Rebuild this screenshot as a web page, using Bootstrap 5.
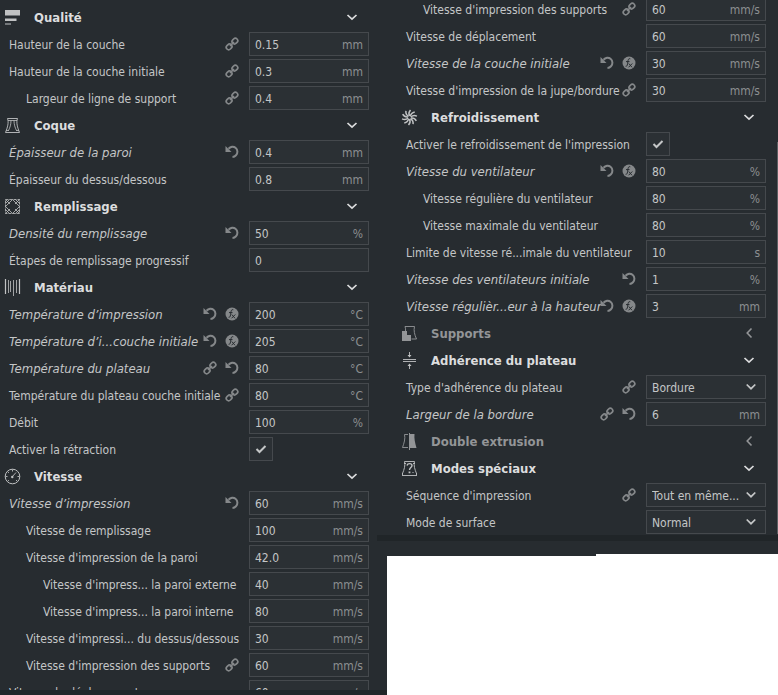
<!DOCTYPE html>
<html lang="fr">
<head>
<meta charset="utf-8">
<meta name="viewport" content="width=device-width, initial-scale=1">
<title>Paramètres d'impression</title>
<link href="https://cdn.jsdelivr.net/npm/bootstrap@5.3.0/dist/css/bootstrap.min.css" rel="stylesheet">
<style>
:root{--panel:#272c30;--field:#2b3034;--line:#45494d;--strip:#202528;--txt:#c4c6c7;--dim:#8c8f91;--head:#dcddde}
body{background:#fff;color:var(--txt);font:12px/16px "DejaVu Sans Condensed","DejaVu Sans",sans-serif}
.pane-a{width:calc(50% - 2px);background:var(--panel)}
.pane-b{margin-left:-10px;flex:1 1 0;min-width:0}
.list-a{padding:5px 18px 0 0}
.list-b{padding:0 12px 1px 20px;background:var(--panel)}
.list-b>.stack{margin-top:-3px}
.stack{display:flex;flex-direction:column;gap:3px}
.strip{height:5px;background:var(--strip)}
.strip-b{height:6px}
.line{display:flex;align-items:center;height:24px;flex:none;padding-left:9px}
.line>label{flex:1 1 0;min-width:0;white-space:nowrap;padding-top:2px}
.in1{padding-left:26px}
.in2{padding-left:43px}
.mod>label{font-style:italic;font-size:13px}
.marks{display:flex;gap:8px;margin-right:10px;color:#85888a}
.marks svg{width:14px;height:14px}
.box{width:120px;height:24px;flex:none;background:var(--field);border:1px solid var(--line);display:flex;align-items:center;padding:2px 5px 0}
.box input{flex:1 1 0;min-width:0;width:0;background:none;border:0;padding:0;color:var(--txt);outline:0}
.box span{color:var(--dim)}
.tickcell{width:120px;flex:none;display:flex}
.form-check-input.tick{width:24px;height:24px;margin:0;border-radius:0;border:1px solid var(--line);background-color:var(--field)}
.form-check-input.tick:checked{background-color:var(--field);border-color:var(--line);background-size:22px 22px;background-image:url("data:image/svg+xml,%3Csvg xmlns='http://www.w3.org/2000/svg' viewBox='0 0 22 22'%3E%3Cpath d='M6.500 11 9.500 14 15.500 8' fill='none' stroke='%23c4c6c7' stroke-width='2'/%3E%3C/svg%3E")}
.form-select.pick{width:120px;height:24px;flex:none;border-radius:0;border:1px solid var(--line);color:var(--txt);font-size:12px;line-height:16px;padding:2px 18px 0 5px;background:var(--field) url("data:image/svg+xml,%3Csvg xmlns='http://www.w3.org/2000/svg' viewBox='0 0 10 8'%3E%3Cpath d='M.700 1.500 5 5.700 9.300 1.500' fill='none' stroke='%23c4c6c7' stroke-width='1.700'/%3E%3C/svg%3E") no-repeat right 9px center/10px 8px}
.cat{display:flex;align-items:center;height:24px;flex:none;width:100%;border:0;background:none;padding:0 11px 0 4px;color:var(--head);font-weight:700;font-size:13px;text-align:left}
.cat span{padding-top:2px}
.cat svg:first-child{width:17px;height:17px;margin-right:13px;color:#c0c2c3}
.cat svg:last-child{width:12px;height:12px;margin-left:auto}
.cat.off,.cat.off svg:first-child{color:#939597}
.foot-l{flex:0 0 54.6%;height:15px;background:var(--panel)}
.foot-r{flex:1;height:13px;background:var(--panel)}
.pane-b .rail{width:1px;right:0;top:142px;bottom:22px;background:#5b5f62}
</style>
<script src="https://cdn.jsdelivr.net/npm/bootstrap@5.3.0/dist/js/bootstrap.bundle.min.js"></script>
</head>
<body>
<svg class="d-none" aria-hidden="true">
<symbol id="link" viewBox="0 0 14 14"><g fill="none" stroke="currentColor" stroke-width="1.700"><rect x="-3" y="-2.400" width="6" height="4.800" rx="2.400" transform="translate(4.100 9.900) rotate(-45)"/><rect x="-3" y="-2.400" width="6" height="4.800" rx="2.400" transform="translate(9.900 4.100) rotate(-45)"/><path d="M5 9 9 5"/></g></symbol>
<symbol id="undo" viewBox="0 0 14 14"><path d="M3.500 3.700C5.500 1.600 8.500 1.200 10.500 2.800c2.500 2 2.400 5.500.5 7.500-1 1.100-2.200 1.600-3.500 1.700" fill="none" stroke="currentColor" stroke-width="2"/><path d="M.500 1v6h6z" fill="currentColor"/></symbol>
<symbol id="fx" viewBox="0 0 14 14"><circle cx="7" cy="7" r="6.500" fill="currentColor"/><path d="M8.300 2.800C6.300 2 6.100 4 5.800 6 5.500 8.500 5.300 10.700 3.600 10.300M4 5.600h3.500M6.800 7.500l3.200 3.800M10.300 7.500l-3.800 3.800" fill="none" stroke="#272c30" stroke-width="1"/></symbol>
<symbol id="down" viewBox="0 0 12 12"><path d="M1.500 4 6 8.200 10.500 4" fill="none" stroke="currentColor" stroke-width="1.700"/></symbol>
<symbol id="side" viewBox="0 0 12 12"><path d="M8.500 1.500 4.200 6l4.300 4.500" fill="none" stroke="currentColor" stroke-width="1.600"/></symbol>
<symbol id="quality" viewBox="0 0 17 17"><path d="M1 1h15v5.500H1zM1 9.500h11.500V12H1zM1 14.500h6v1H1z" fill="currentColor"/></symbol>
<symbol id="shell" viewBox="0 0 17 17"><g fill="none" stroke="currentColor" stroke-width=".9"><path d="M3.500 1.500h10c-1.500 4 0 9 2 14h-14c2-5 3.500-10 2-14z"/><path d="M7 3.500c0 4-1 7-2.500 10M10 3.500c0 4 1 7 2.500 10M4 3.500h9M2 13.500h3M12 13.500h3" stroke-width=".8"/></g></symbol>
<symbol id="infill" viewBox="0 0 17 17"><g fill="none" stroke="currentColor" stroke-width=".8"><path d="M1.500 1.500h14v14h-14z" stroke-dasharray="3 1"/><path d="M1.500 8.500l7-7 7 7-7 7zM1.500 5.500l4-4M11.500 1.500l4 4M1.500 11.500l4 4M15.500 11.500l-4 4M1.500 1.500l4.500 4.500M15.500 1.500 11 6M1.500 15.500 6 11M15.500 15.500 11 11"/></g></symbol>
<symbol id="material" viewBox="0 0 17 17"><path d="M1.500 0v15M15.500 0v15" stroke="currentColor" stroke-width="1.200"/><path d="M4.500 1v13M6.500 2v11M9.500 1v16M12.500 1v13" stroke="currentColor" stroke-width=".8"/></symbol>
<symbol id="speed" viewBox="0 0 17 17"><circle cx="8.500" cy="8.500" r="7.300" fill="none" stroke="currentColor" stroke-width="1"/><path d="M8.500 1.500v2M1.500 8.500h2M13.500 8.500h2M3.700 3.700l1.200 1.200M3.700 13.300l1.200-1.200M12 12l1.300 1.300M8 9l4-4.500" stroke="currentColor" stroke-width=".9"/><circle cx="8.300" cy="9" r="1.200" fill="currentColor"/></symbol>
<symbol id="cool" viewBox="0 0 17 17"><g fill="none" stroke="currentColor" stroke-width="1.500"><path id="bl" d="M8.500 7C7.500 5 7.700 3 9.500 1M8.500 10C9.500 12 9.300 14 7.500 16"/><use href="#bl" transform="rotate(36 8.500 8.500)"/><use href="#bl" transform="rotate(72 8.500 8.500)"/><use href="#bl" transform="rotate(108 8.500 8.500)"/><use href="#bl" transform="rotate(144 8.500 8.500)"/></g></symbol>
<symbol id="support" viewBox="0 0 17 17"><path d="M4.500 6c.3-1.500 0-3-.5-4.500h9.500c-1 4 0 8 2 12.500h-5" fill="none" stroke="currentColor" stroke-width=".9"/><path d="M1 6h5v4h4v6H1z" fill="currentColor"/></symbol>
<symbol id="adhere" viewBox="0 0 17 17"><path d="M2 7.500h13M2 9.500h13M8.500 0v5M8.500 17v-5" stroke="currentColor" stroke-width=".9"/><path d="M6.500 3h4L8.500 5.500zM6.500 14h4l-2-2.500z" fill="currentColor"/></symbol>
<symbol id="dual" viewBox="0 0 17 17"><path d="M7 1.500H3.500c1 4-.5 9-2 13H7" fill="none" stroke="currentColor" stroke-width=".9"/><path d="M8 0h1v17H8zM9 1h4.500c-.5 4 .5 9 2 14H9z" fill="currentColor"/></symbol>
<symbol id="special" viewBox="0 0 17 17"><path d="M3.500 1.500h10c-1 4 .3 8 2 12M3.500 1.500c1 4-.3 8-2 12M1 15.500h15M1.500 13v2M15.500 13v2M3 3.500h2M12 3.500h2" fill="none" stroke="currentColor" stroke-width=".9"/><path d="M6 5.500c.5-2.500 5-2.500 5 0 0 2-2.500 2-2.500 4.500" fill="none" stroke="currentColor" stroke-width="1.400"/><path d="M7.600 11.500h1.800v1.800H7.600zM11.500 12h1v1h-1z" fill="currentColor"/></symbol>
</svg>
<main class="d-flex vh-100 overflow-hidden align-items-start">
<section class="pane-a d-flex flex-column flex-shrink-0 h-100">
<div class="list-a flex-grow-1 overflow-hidden">
<div class="stack">
<button class="cat" type="button"><svg><use href="#quality"/></svg><span>Qualité</span><svg><use href="#down"/></svg></button>
<div class="line"><label for="a1">Hauteur de la couche</label><div class="marks"><svg><use href="#link"/></svg></div><div class="box"><input id="a1" value="0.15"><span>mm</span></div></div>
<div class="line"><label for="a2">Hauteur de la couche initiale</label><div class="marks"><svg><use href="#link"/></svg></div><div class="box"><input id="a2" value="0.3"><span>mm</span></div></div>
<div class="line in1"><label for="a3">Largeur de ligne de support</label><div class="marks"><svg><use href="#link"/></svg></div><div class="box"><input id="a3" value="0.4"><span>mm</span></div></div>
<button class="cat" type="button"><svg><use href="#shell"/></svg><span>Coque</span><svg><use href="#down"/></svg></button>
<div class="line mod"><label for="a4">Épaisseur de la paroi</label><div class="marks"><svg><use href="#undo"/></svg></div><div class="box"><input id="a4" value="0.4"><span>mm</span></div></div>
<div class="line"><label for="a5">Épaisseur du dessus/dessous</label><div class="box"><input id="a5" value="0.8"><span>mm</span></div></div>
<button class="cat" type="button"><svg><use href="#infill"/></svg><span>Remplissage</span><svg><use href="#down"/></svg></button>
<div class="line mod"><label for="a6">Densité du remplissage</label><div class="marks"><svg><use href="#undo"/></svg></div><div class="box"><input id="a6" value="50"><span>%</span></div></div>
<div class="line"><label for="a7">Étapes de remplissage progressif</label><div class="box"><input id="a7" value="0"></div></div>
<button class="cat" type="button"><svg><use href="#material"/></svg><span>Matériau</span><svg><use href="#down"/></svg></button>
<div class="line mod"><label for="a8">Température d’impression</label><div class="marks"><svg><use href="#undo"/></svg><svg><use href="#fx"/></svg></div><div class="box"><input id="a8" value="200"><span>°C</span></div></div>
<div class="line mod"><label for="a9">Température d’i...couche initiale</label><div class="marks"><svg><use href="#undo"/></svg><svg><use href="#fx"/></svg></div><div class="box"><input id="a9" value="205"><span>°C</span></div></div>
<div class="line mod"><label for="a10">Température du plateau</label><div class="marks"><svg><use href="#link"/></svg><svg><use href="#undo"/></svg></div><div class="box"><input id="a10" value="80"><span>°C</span></div></div>
<div class="line"><label for="a11">Température du plateau couche initiale</label><div class="marks"><svg><use href="#link"/></svg></div><div class="box"><input id="a11" value="80"><span>°C</span></div></div>
<div class="line"><label for="a12">Débit</label><div class="box"><input id="a12" value="100"><span>%</span></div></div>
<div class="line"><label for="a13">Activer la rétraction</label><div class="tickcell"><input id="a13" class="form-check-input tick" type="checkbox" checked></div></div>
<button class="cat" type="button"><svg><use href="#speed"/></svg><span>Vitesse</span><svg><use href="#down"/></svg></button>
<div class="line mod"><label for="a14">Vitesse d’impression</label><div class="marks"><svg><use href="#undo"/></svg></div><div class="box"><input id="a14" value="60"><span>mm/s</span></div></div>
<div class="line in1"><label for="a15">Vitesse de remplissage</label><div class="box"><input id="a15" value="100"><span>mm/s</span></div></div>
<div class="line in1"><label for="a16">Vitesse d'impression de la paroi</label><div class="box"><input id="a16" value="42.0"><span>mm/s</span></div></div>
<div class="line in2"><label for="a17">Vitesse d'impress... la paroi externe</label><div class="box"><input id="a17" value="40"><span>mm/s</span></div></div>
<div class="line in2"><label for="a18">Vitesse d'impress... la paroi interne</label><div class="box"><input id="a18" value="80"><span>mm/s</span></div></div>
<div class="line in1"><label for="a19">Vitesse d'impressi... du dessus/dessous</label><div class="box"><input id="a19" value="30"><span>mm/s</span></div></div>
<div class="line in1"><label for="a20">Vitesse d'impression des supports</label><div class="marks"><svg><use href="#link"/></svg></div><div class="box"><input id="a20" value="60"><span>mm/s</span></div></div>
<div class="line"><label for="a21">Vitesse de déplacement</label><div class="box"><input id="a21" value="60"><span>mm/s</span></div></div>
</div>
</div>
<div class="strip flex-shrink-0"></div>
</section>
<section class="pane-b position-relative">
<div class="list-b overflow-hidden">
<div class="stack">
<div class="line in1"><label for="b1">Vitesse d'impression des supports</label><div class="marks"><svg><use href="#link"/></svg></div><div class="box"><input id="b1" value="60"><span>mm/s</span></div></div>
<div class="line"><label for="b2">Vitesse de déplacement</label><div class="box"><input id="b2" value="60"><span>mm/s</span></div></div>
<div class="line mod"><label for="b3">Vitesse de la couche initiale</label><div class="marks"><svg><use href="#undo"/></svg><svg><use href="#fx"/></svg></div><div class="box"><input id="b3" value="30"><span>mm/s</span></div></div>
<div class="line"><label for="b4">Vitesse d'impression de la jupe/bordure</label><div class="marks"><svg><use href="#link"/></svg></div><div class="box"><input id="b4" value="30"><span>mm/s</span></div></div>
<button class="cat" type="button"><svg><use href="#cool"/></svg><span>Refroidissement</span><svg><use href="#down"/></svg></button>
<div class="line"><label for="b5">Activer le refroidissement de l'impression</label><div class="tickcell"><input id="b5" class="form-check-input tick" type="checkbox" checked></div></div>
<div class="line mod"><label for="b6">Vitesse du ventilateur</label><div class="marks"><svg><use href="#undo"/></svg><svg><use href="#fx"/></svg></div><div class="box"><input id="b6" value="80"><span>%</span></div></div>
<div class="line in1"><label for="b7">Vitesse régulière du ventilateur</label><div class="box"><input id="b7" value="80"><span>%</span></div></div>
<div class="line in1"><label for="b8">Vitesse maximale du ventilateur</label><div class="box"><input id="b8" value="80"><span>%</span></div></div>
<div class="line"><label for="b9">Limite de vitesse ré...imale du ventilateur</label><div class="box"><input id="b9" value="10"><span>s</span></div></div>
<div class="line mod"><label for="b10">Vitesse des ventilateurs initiale</label><div class="marks"><svg><use href="#undo"/></svg></div><div class="box"><input id="b10" value="1"><span>%</span></div></div>
<div class="line mod"><label for="b11">Vitesse régulièr...eur à la hauteur</label><div class="marks"><svg><use href="#undo"/></svg><svg><use href="#fx"/></svg></div><div class="box"><input id="b11" value="3"><span>mm</span></div></div>
<button class="cat off" type="button"><svg><use href="#support"/></svg><span>Supports</span><svg><use href="#side"/></svg></button>
<button class="cat" type="button"><svg><use href="#adhere"/></svg><span>Adhérence du plateau</span><svg><use href="#down"/></svg></button>
<div class="line"><label for="b12">Type d'adhérence du plateau</label><div class="marks"><svg><use href="#link"/></svg></div><select id="b12" class="form-select pick"><option>Bordure</option></select></div>
<div class="line mod"><label for="b13">Largeur de la bordure</label><div class="marks"><svg><use href="#link"/></svg><svg><use href="#undo"/></svg></div><div class="box"><input id="b13" value="6"><span>mm</span></div></div>
<button class="cat off" type="button"><svg><use href="#dual"/></svg><span>Double extrusion</span><svg><use href="#side"/></svg></button>
<button class="cat" type="button"><svg><use href="#special"/></svg><span>Modes spéciaux</span><svg><use href="#down"/></svg></button>
<div class="line"><label for="b14">Séquence d'impression</label><div class="marks"><svg><use href="#link"/></svg></div><select id="b14" class="form-select pick"><option>Tout en même...</option></select></div>
<div class="line"><label for="b15">Mode de surface</label><select id="b15" class="form-select pick"><option>Normal</option></select></div>
</div>
</div>
<div class="strip strip-b"></div>
<div class="d-flex align-items-start"><div class="foot-l"></div><div class="foot-r"></div></div>
<div class="rail position-absolute"></div>
</section>
</main>
</body>
</html>
